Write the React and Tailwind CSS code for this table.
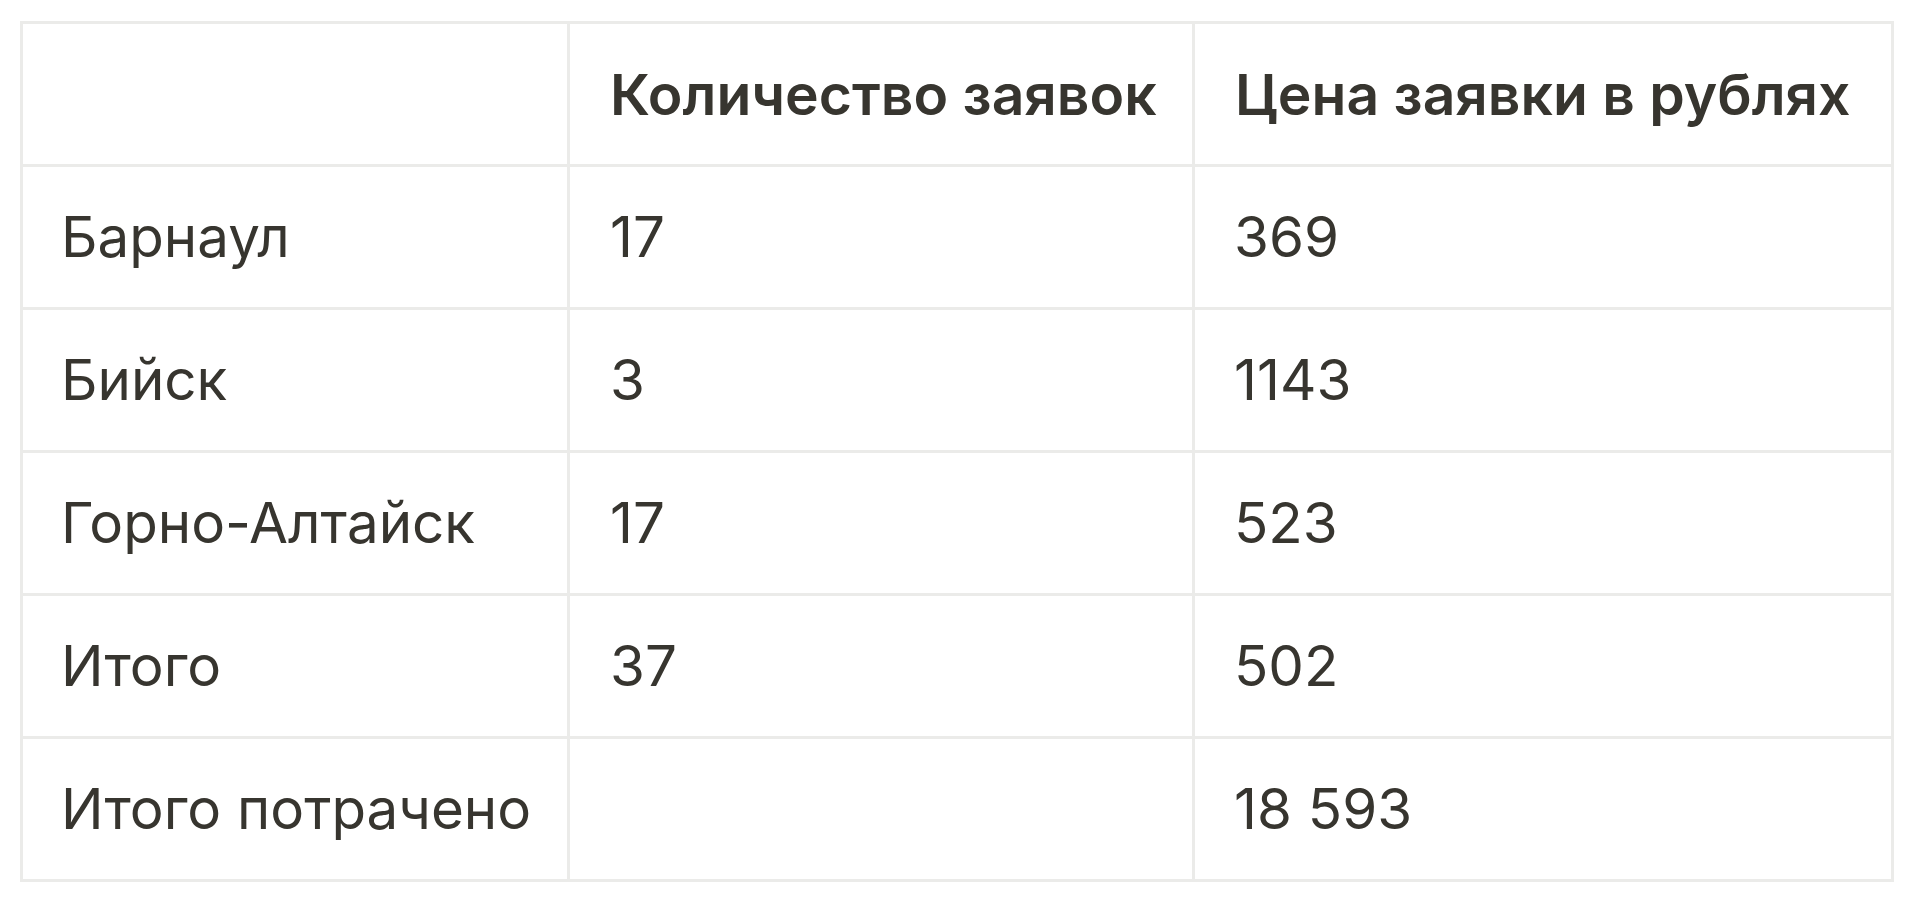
import React from "react";

const rows = [
  ["Барнаул", "17", "369"],
  ["Бийск", "3", "1143"],
  ["Горно-Алтайск", "17", "523"],
  ["Итого", "37", "502"],
  ["Итого потрачено", "", "18 593"],
];

export default function App() {
  return (
    <div className="min-h-screen bg-white pt-[21px] pl-[20px] font-['Inter','Liberation_Sans',sans-serif] text-[#37352f]">
      <table className="border-collapse border-[3px] border-[#ebebe9] leading-none">
        <thead>
          <tr className="h-[143px] text-[57px]">
            <th className="w-[547px] border-[3px] border-[#ebebe9]"></th>
            <th className="w-[625px] border-[3px] border-[#ebebe9] pl-[40px] text-left font-semibold">
              Количество заявок
            </th>
            <th className="w-[699px] border-[3px] border-[#ebebe9] pl-[40px] text-left font-semibold">
              Цена заявки в рублях
            </th>
          </tr>
        </thead>
        <tbody className="text-[56.5px]">
          {rows.map((r, i) => (
            <tr key={i} className="h-[143px]">
              <td className="border-[3px] border-[#ebebe9] pl-[38px]">{r[0]}</td>
              <td className="border-[3px] border-[#ebebe9] pl-[40px]">{r[1]}</td>
              <td className="border-[3px] border-[#ebebe9] pl-[39px]">{r[2]}</td>
            </tr>
          ))}
        </tbody>
      </table>
    </div>
  );
}
